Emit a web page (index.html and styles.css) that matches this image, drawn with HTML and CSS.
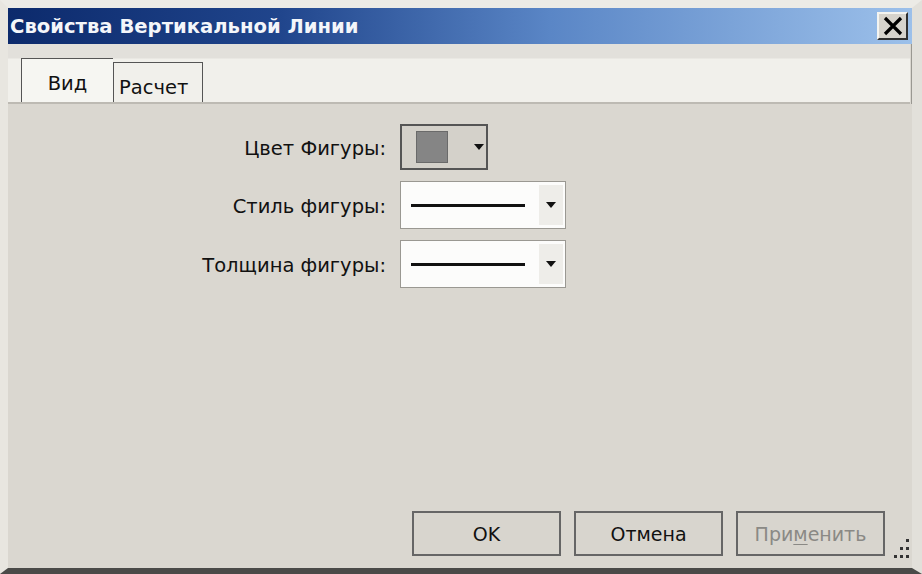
FILE: index.html
```html
<!DOCTYPE html>
<html>
<head>
<meta charset="utf-8">
<link rel="stylesheet" href="styles.css">
</head>
<body>
<div class="window">
  <div class="titlebar">
    <span class="title">Свойства Вертикальной Линии</span>
    <button class="close" aria-label="close">
      <svg width="22" height="20" viewBox="0 0 22 20"><path d="M3 2 L19 18 M19 2 L3 18" stroke="#000" stroke-width="3.2" fill="none"/></svg>
    </button>
  </div>
  <div class="tabstrip">
    <div class="tab active">Вид</div>
    <div class="tab">Расчет</div>
  </div>
  <div class="panel">
    <div class="form">
      <label class="lbl">Цвет Фигуры:</label>
      <div class="colorbtn">
        <span class="swatch"></span>
        <span class="arrow"></span>
      </div>
      <label class="lbl">Стиль фигуры:</label>
      <div class="combo">
        <span class="linebox"><span class="line"></span></span>
        <span class="dropbtn"><span class="arrow"></span></span>
      </div>
      <label class="lbl">Толщина фигуры:</label>
      <div class="combo">
        <span class="linebox"><span class="line"></span></span>
        <span class="dropbtn"><span class="arrow"></span></span>
      </div>
    </div>
    <div class="footer">
      <button class="btn">OK</button>
      <button class="btn">Отмена</button>
      <button class="btn disabled">При<u>м</u>енить</button>
      <span class="grip">
        <svg width="20" height="22" viewBox="0 0 20 22">
          <rect x="16" y="2" width="3" height="3" fill="#333"/>
          <rect x="10" y="10" width="3" height="3" fill="#333"/>
          <rect x="16" y="10" width="3" height="3" fill="#333"/>
          <rect x="4" y="18" width="3" height="3" fill="#333"/>
          <rect x="10" y="18" width="3" height="3" fill="#333"/>
          <rect x="16" y="18" width="3" height="3" fill="#333"/>
        </svg>
      </span>
    </div>
  </div>
</div>
</body>
</html>
```

FILE: styles.css
```css
* { box-sizing: border-box; }
html, body { margin: 0; padding: 0; }
body {
  width: 922px;
  height: 574px;
  overflow: hidden;
  background: #d8d5ce;
  font-family: "DejaVu Sans", "Liberation Sans", sans-serif;
}
.window {
  width: 922px;
  height: 574px;
  display: flex;
  flex-direction: column;
  background: #dad7d0;
  border-top: 8px solid #ecebe6;
  border-left: 8px solid #e8e6e0;
  border-right: 10px solid #e2e0da;
  border-bottom: 6px solid #4a4a48;
  box-shadow: inset -1px 0 0 #9a9892;
}
.titlebar {
  height: 36px;
  flex: none;
  display: flex;
  align-items: center;
  justify-content: space-between;
  background: linear-gradient(to right, #0c2a6c 0%, #20458c 30%, #5a86c6 60%, #9cc0ea 100%);
  padding: 0 4px 0 2px;
}
.title {
  color: #f4f6fa;
  font-weight: bold;
  font-size: 19.6px;
}
.close {
  width: 31px;
  height: 28px;
  padding: 0;
  display: flex;
  align-items: center;
  justify-content: center;
  background: #d6d3cc;
  border: 2px solid;
  border-color: #f4f4f0 #303030 #303030 #f4f4f0;
}
.tabstrip {
  height: 60px;
  flex: none;
  display: flex;
  align-items: flex-end;
  padding-left: 13px;
  background: linear-gradient(to bottom, #e2e0db 0px, #e2e0db 14px, #f1f0eb 15px, #f1f0eb 100%);
  border-bottom: 2px solid #bdbab3;
  margin-right: 2px;
}
.tab {
  font-size: 19.5px;
  color: #111;
  border: 1px solid #555;
  border-bottom: none;
  background: #f1f0eb;
  height: 40px;
  padding: 13px 4px 0 5px;
}
.tab.active {
  height: 44px;
  width: 92px;
  text-align: center;
  padding: 13px 0 0 0;
  background: #f6f6f2;
  border-right: none;
}
.tab:not(.active) { width: 90px; }
.panel {
  flex: 1;
  display: flex;
  flex-direction: column;
  justify-content: space-between;
  background: #dad7d0;
  padding-top: 20px;
}
.form {
  display: grid;
  grid-template-columns: 378px auto;
  column-gap: 14px;
  row-gap: 11px;
  align-items: center;
  justify-items: start;
}
.lbl {
  justify-self: end;
  font-size: 19.5px;
  color: #111;
  padding-top: 2px;
}
.colorbtn {
  width: 88px;
  height: 46px;
  border: 2px solid #555;
  background: #d4d1ca;
  display: flex;
  align-items: center;
  padding-left: 14px;
  gap: 0;
}
.swatch {
  width: 32px;
  height: 32px;
  background: #858585;
  border: 1px solid #6a6a6a;
}
.colorbtn .arrow { margin-left: 26px; }
.arrow {
  width: 0; height: 0;
  border-left: 5px solid transparent;
  border-right: 5px solid transparent;
  border-top: 6px solid #111;
}
.combo {
  width: 166px;
  height: 48px;
  border: 1px solid #9a9892;
  background: #fcfcfb;
  display: flex;
  align-items: stretch;
  padding: 3px 2px 3px 0;
}
.linebox {
  flex: 1;
  display: flex;
  align-items: center;
  padding-left: 10px;
}
.line {
  display: block;
  width: 114px;
  height: 3px;
  background: #111;
}
.dropbtn {
  width: 24px;
  background: #eeede9;
  display: flex;
  align-items: center;
  justify-content: center;
}
.footer {
  display: flex;
  align-items: flex-start;
  padding-left: 404px;
  gap: 13px;
  height: 57px;
  position: relative;
}
.btn {
  width: 149px;
  height: 45px;
  background: #d8d5ce;
  border: 2px solid #666;
  font-family: "DejaVu Sans", "Liberation Sans", sans-serif;
  font-size: 19px;
  color: #111;
  padding: 0;
}
.btn.disabled { color: #8a8985; }
.btn.disabled u { text-decoration-thickness: 1px; text-underline-offset: 3px; }
.grip {
  position: absolute;
  right: 2px;
  bottom: 5px;
}
```
